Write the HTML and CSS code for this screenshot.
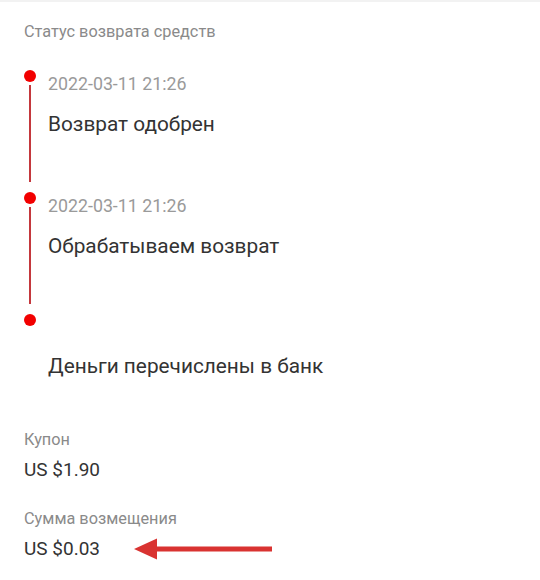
FILE: index.html
```html
<!DOCTYPE html>
<html lang="ru">
<head>
<meta charset="utf-8">
<title>Статус возврата средств</title>
<link rel="stylesheet" href="styles.css">
</head>
<body>
<div class="topbar"></div>
<main class="page">
  <h2 class="section-title">Статус возврата средств</h2>
  <ol class="timeline">
    <li class="step">
      <div class="rail"><span class="dot"></span><span class="line"></span></div>
      <div class="step-body">
        <div class="step-date">2022-03-11 21:26</div>
        <div class="step-title">Возврат одобрен</div>
      </div>
    </li>
    <li class="step">
      <div class="rail"><span class="dot"></span><span class="line"></span></div>
      <div class="step-body">
        <div class="step-date">2022-03-11 21:26</div>
        <div class="step-title">Обрабатываем возврат</div>
      </div>
    </li>
    <li class="step step-last">
      <div class="rail"><span class="dot"></span></div>
      <div class="step-body">
        <div class="step-date step-date-empty"></div>
        <div class="step-title">Деньги перечислены в банк</div>
      </div>
    </li>
  </ol>
  <dl class="fields">
    <div class="field">
      <dt class="field-label">Купон</dt>
      <dd class="field-value">US $1.90</dd>
    </div>
    <div class="field">
      <dt class="field-label">Сумма возмещения</dt>
      <dd class="field-value">US $0.03
        <svg class="arrow" width="140" height="24" viewBox="0 0 140 24" aria-hidden="true">
          <polygon points="0,12 23,1.5 23,22.5" fill="#d93331"/>
          <rect x="21" y="9.5" width="117" height="5" fill="#d93331"/>
        </svg>
      </dd>
    </div>
  </dl>
</main>
</body>
</html>
```
FILE: styles.css
```css
* { box-sizing: border-box; }
html, body { margin: 0; padding: 0; background: #fff; }
body { font-family: Roboto, "Noto Sans", "Liberation Sans", sans-serif; color: #333; }

.topbar { height: 2px; background: #f2f2f2; }

.page { padding: 20px 24px 0 24px; }

.section-title {
  margin: 0;
  font-size: 16.3px;
  line-height: 20px;
  font-weight: 400;
  color: #8a8a8a;
}

.timeline { list-style: none; margin: 28px 0 0 0; padding: 0; }

.step { display: flex; height: 122px; }
.step-last { height: auto; }

.rail {
  width: 24px;
  display: flex;
  flex-direction: column;
  align-items: flex-start;
}
.dot {
  width: 12px;
  height: 12px;
  border-radius: 50%;
  background: #f20000;
  flex: none;
}
.line {
  width: 2px;
  margin: 3px 0 10px 5px;
  flex: 1;
  background: #c4383d;
}

.step-body { flex: 1; }
.step-date {
  font-size: 17.8px;
  line-height: 28px;
  color: #9a9a9a;
}
.step-date-empty { height: 26px; }
.step-title {
  margin-top: 12px;
  font-size: 20.8px;
  line-height: 28px;
  color: #333;
}

.fields { margin: 50px 0 0 0; }
.field { margin-bottom: 26px; }
.field-label {
  font-size: 16.3px;
  line-height: 20px;
  color: #8a8a8a;
}
.field-value {
  margin: 7px 0 0 0;
  font-size: 19px;
  line-height: 26px;
  color: #333;
  display: flex;
  align-items: center;
}
.arrow { margin-left: 34px; }
```
